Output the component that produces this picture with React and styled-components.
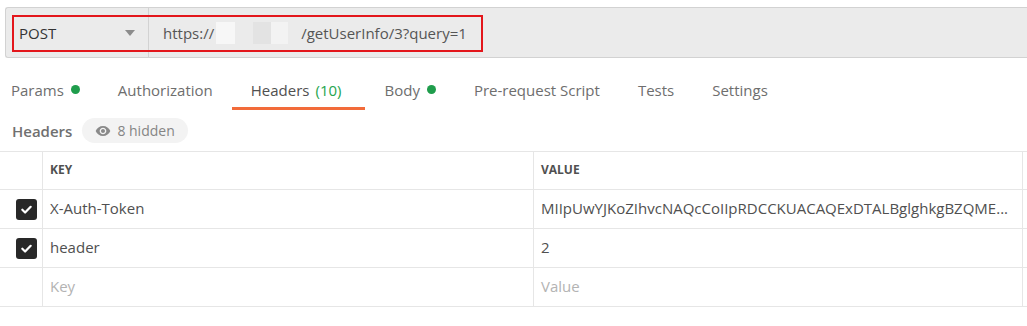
import React from "react";
import styled, { createGlobalStyle } from "styled-components";

const GlobalStyle = createGlobalStyle`
  html, body {
    margin: 0;
    padding: 0;
    background: #ffffff;
    font-family: "Open Sans", "Liberation Sans", sans-serif;
    -webkit-font-smoothing: antialiased;
  }
  * { box-sizing: border-box; }
`;

const Page = styled.div`
  position: relative;
  width: 1027px;
  height: 326px;
  overflow: hidden;
`;

/* ---------- request bar ---------- */

const UrlBar = styled.div`
  display: flex;
  height: 51px;
  margin: 7px 0 0 5px;
  background: #ebebeb;
  border: 1px solid #d2d2d2;
  border-right: none;
  border-radius: 3px 0 0 3px;
`;

const Method = styled.div`
  display: flex;
  align-items: center;
  justify-content: space-between;
  width: 143px;
  padding: 0 13px 0 13px;
  border-right: 1px solid #d2d2d2;
  font-size: 15px;
  color: #333333;
`;

const Caret = styled.span`
  width: 0;
  height: 0;
  border-left: 5px solid transparent;
  border-right: 5px solid transparent;
  border-top: 6px solid #8c8c8c;
`;

const Url = styled.div`
  display: flex;
  align-items: center;
  padding-left: 14px;
  font-size: 15px;
  color: #555555;
`;

const Blur = styled.span`
  display: inline-block;
  width: ${p => p.$w}px;
  height: 22px;
  margin-left: ${p => p.$ml || 0}px;
  background: ${p => p.$c};
`;

const Path = styled.span`
  margin-left: 13px;
`;

const Highlight = styled.div`
  position: absolute;
  left: 12px;
  top: 15px;
  width: 471px;
  height: 37px;
  border: 2px solid #e3161b;
  pointer-events: none;
`;

/* ---------- tabs ---------- */

const Tabs = styled.div`
  display: flex;
  margin-top: 14px;
`;

const Tab = styled.div`
  display: flex;
  align-items: center;
  height: 38px;
  padding: 0 19px;
  font-size: 15px;
  color: ${p => (p.$active ? "#505050" : "#6e6e6e")};
  border-bottom: 3px solid ${p => (p.$active ? "#f26b3a" : "transparent")};
  &:first-child { padding-left: 11px; }
`;

const Dot = styled.span`
  width: 9px;
  height: 9px;
  margin-left: 7px;
  border-radius: 50%;
  background: #1f9d4c;
`;

const Count = styled.span`
  margin: 0 5px 0 6px;
  color: #26a54e;
`;

/* ---------- headers sub-bar ---------- */

const SubBar = styled.div`
  display: flex;
  align-items: center;
  gap: 10px;
  height: 25px;
  margin: 8px 0 0 12px;
`;

const SubTitle = styled.span`
  font-size: 15px;
  font-weight: 600;
  color: #707070;
`;

const HiddenPill = styled.span`
  display: flex;
  align-items: center;
  gap: 6px;
  height: 25px;
  padding: 0 13px 0 13px;
  border-radius: 13px;
  background: #f3f3f3;
  font-size: 14px;
  color: #858585;
`;

/* ---------- table ---------- */

const Table = styled.div`
  display: grid;
  grid-template-columns: 43px 491px 489px 1fr;
  margin-top: 8px;
  border-top: 1px solid #e6e6e6;
`;

const Cell = styled.div`
  display: flex;
  align-items: center;
  height: ${p => (p.$head ? 38 : 39)}px;
  padding: 0 10px 2px 7px;
  border-right: 1px solid #e6e6e6;
  border-bottom: 1px solid #e6e6e6;
  font-size: ${p => (p.$head ? 12 : 15)}px;
  font-weight: ${p => (p.$head ? 700 : 400)};
  text-transform: ${p => (p.$head ? "uppercase" : "none")};
  color: ${p => (p.$muted ? "#b3b3b3" : "#505050")};
  white-space: nowrap;
  overflow: hidden;
`;

const CheckCell = styled(Cell)`
  padding: 0 0 0 16px;
`;

const EndCell = styled(Cell)`
  padding: 0;
  border-right: none;
`;

const Box = styled.span`
  display: flex;
  align-items: center;
  justify-content: center;
  width: 21px;
  height: 21px;
  border-radius: 3px;
  background: #282828;
`;

const EyeIcon = () => (
  <svg width="16" height="16" viewBox="0 0 24 24" fill="#8a8a8a">
    <path d="M12 4.5C7 4.5 2.73 7.61 1 12c1.73 4.39 6 7.5 11 7.5s9.27-3.11 11-7.5c-1.73-4.39-6-7.5-11-7.5zM12 17c-2.76 0-5-2.24-5-5s2.24-5 5-5 5 2.24 5 5-2.24 5-5 5zm0-8c-1.66 0-3 1.34-3 3s1.34 3 3 3 3-1.34 3-3-1.34-3-3-3z" />
  </svg>
);

const Checkbox = () => (
  <Box>
    <svg width="13" height="13" viewBox="0 0 14 14">
      <path d="M2.5 7.3l3 3 6-6.2" fill="none" stroke="#fff" strokeWidth="2.4" strokeLinecap="round" strokeLinejoin="round" />
    </svg>
  </Box>
);

const rows = [
  { checked: true, key: "X-Auth-Token", value: "MIIpUwYJKoZIhvcNAQcCoIIpRDCCKUACAQExDTALBglghkgBZQME..." },
  { checked: true, key: "header", value: "2" },
  { checked: false, key: "Key", value: "Value", placeholder: true }
];

const tabs = [
  { label: "Params", dot: true },
  { label: "Authorization" },
  { label: "Headers", count: "(10)", active: true },
  { label: "Body", dot: true },
  { label: "Pre-request Script" },
  { label: "Tests" },
  { label: "Settings" }
];

export default function App() {
  return (
    <Page>
      <GlobalStyle />
      <UrlBar>
        <Method>
          POST
          <Caret />
        </Method>
        <Url>
          https://
          <Blur $w={19} $ml={2} $c="#f7f7f7" />
          <Blur $w={18} $ml={18} $c="#e3e3e3" />
          <Blur $w={17} $c="#f3f3f3" />
          <Path>/getUserInfo/3?query=1</Path>
        </Url>
      </UrlBar>
      <Highlight />

      <Tabs>
        {tabs.map(t => (
          <Tab key={t.label} $active={t.active}>
            {t.label}
            {t.count && <Count>{t.count}</Count>}
            {t.dot && <Dot />}
          </Tab>
        ))}
      </Tabs>

      <SubBar>
        <SubTitle>Headers</SubTitle>
        <HiddenPill>
          <EyeIcon />
          8 hidden
        </HiddenPill>
      </SubBar>

      <Table>
        <CheckCell $head />
        <Cell $head>Key</Cell>
        <Cell $head>Value</Cell>
        <EndCell $head />
        {rows.map(r => (
          <React.Fragment key={r.key}>
            <CheckCell>{r.checked && <Checkbox />}</CheckCell>
            <Cell $muted={r.placeholder}>{r.key}</Cell>
            <Cell $muted={r.placeholder}>{r.value}</Cell>
            <EndCell />
          </React.Fragment>
        ))}
      </Table>
    </Page>
  );
}
